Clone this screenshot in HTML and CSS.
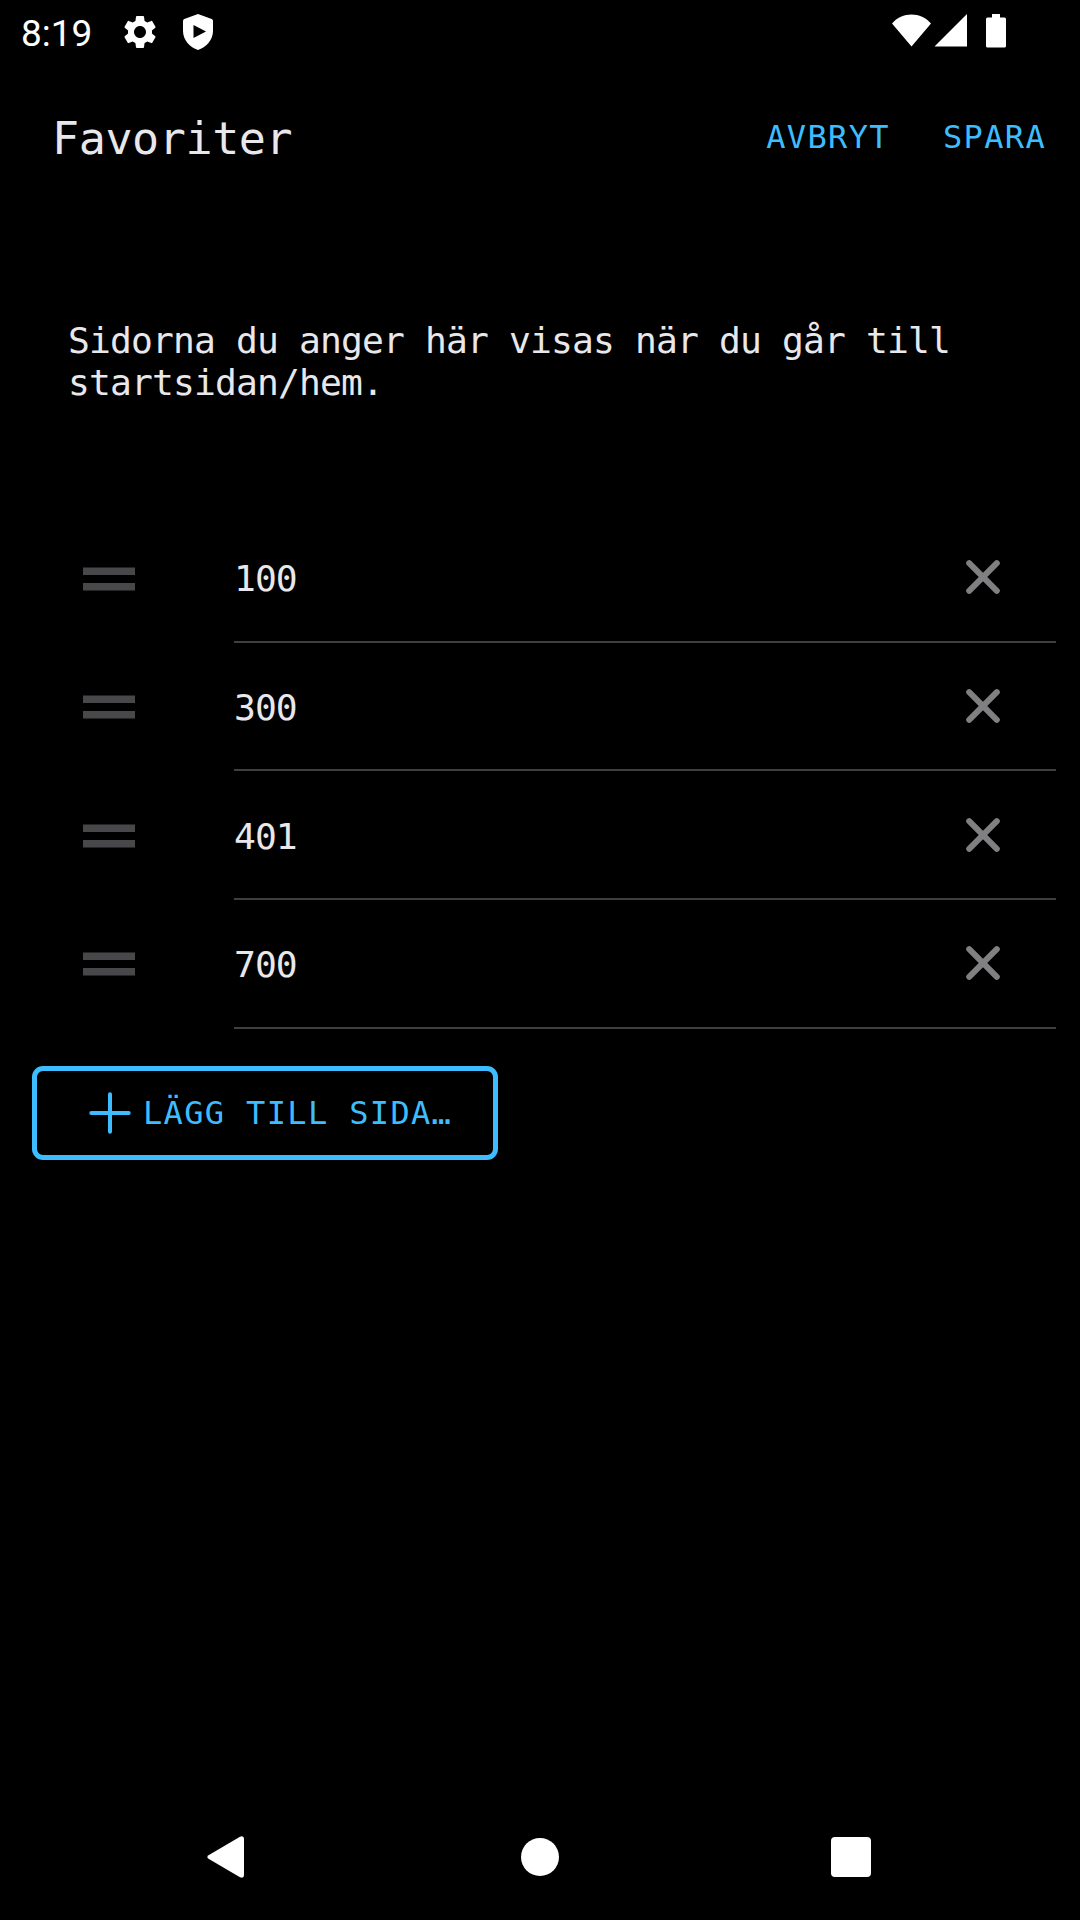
FILE: index.html
```html
<!DOCTYPE html>
<html lang="sv">
<head>
<meta charset="utf-8">
<title>Favoriter</title>
<link rel="stylesheet" href="styles.css">
</head>
<body>
<div class="screen">
  <div class="status">
    <span class="clock">8:19</span>
    <svg class="gear" viewBox="0 0 24 24"><path d="M19.14 12.94c.04-.3.06-.61.06-.94 0-.32-.02-.64-.07-.94l2.03-1.58c.18-.14.23-.41.12-.61l-1.92-3.32c-.12-.22-.37-.29-.59-.22l-2.39.96c-.5-.38-1.03-.7-1.62-.94L14.4 2.81c-.04-.24-.24-.41-.48-.41h-3.84c-.24 0-.43.17-.47.41l-.36 2.54c-.59.24-1.13.57-1.62.94l-2.39-.96c-.22-.08-.47 0-.59.22L2.74 8.87c-.12.21-.08.47.12.61l2.03 1.58c-.05.3-.09.63-.09.94s.02.64.07.94l-2.03 1.58c-.18.14-.23.41-.12.61l1.92 3.32c.12.22.37.29.59.22l2.39-.96c.5.38 1.03.7 1.62.94l.36 2.54c.05.24.24.41.48.41h3.84c.24 0 .44-.17.47-.41l.36-2.54c.59-.24 1.13-.56 1.62-.94l2.39.96c.22.08.47 0 .59-.22l1.92-3.32c.12-.22.07-.47-.12-.61l-2.01-1.58zM12 15.6c-1.98 0-3.6-1.62-3.6-3.6s1.62-3.6 3.6-3.6 3.6 1.62 3.6 3.6-1.62 3.6-3.6 3.6z"/></svg>
    <svg class="shield" viewBox="0 0 30 36"><path fill-rule="evenodd" d="M15 0 28.7 5Q30 5.600 30 7V17C30 26 23 33.500 15 36 7 33.500 0 26 0 17V7Q0 5.600 1.300 5ZM10.500 11V24L23 17.500Z"/></svg>
    <svg class="signals" viewBox="0 0 115 34"><path d="M0 9.500C10-2.500 29-2.500 39 9.500L19.500 32.500ZM42.500 32.500 75 0V32.500ZM100 0h8v3.500h4.500q1.500 0 1.500 1.500v27q0 1.500-1.500 1.500h-17q-1.500 0-1.500-1.500v-27q0-1.500 1.500-1.500h4.500Z"/></svg>
  </div>
  <header class="appbar">
    <h1 class="title">Favoriter</h1>
    <button class="action">AVBRYT</button>
    <button class="action">SPARA</button>
  </header>
  <p class="intro">Sidorna du anger här visas när du går till startsidan/hem.</p>
  <ul class="list">
    <li class="row">
      <svg class="handle" viewBox="0 0 52 24"><path d="M0 .5h52V8H0ZM0 16h52v7.500H0Z"/></svg>
      <div class="field"><span class="page">100</span><svg class="remove" viewBox="0 0 34 34"><path d="M3.200 3.200 30.800 30.800M30.800 3.200 3.200 30.800"/></svg></div>
    </li>
    <li class="row">
      <svg class="handle" viewBox="0 0 52 24"><path d="M0 .5h52V8H0ZM0 16h52v7.500H0Z"/></svg>
      <div class="field"><span class="page">300</span><svg class="remove" viewBox="0 0 34 34"><path d="M3.200 3.200 30.800 30.800M30.800 3.200 3.200 30.800"/></svg></div>
    </li>
    <li class="row">
      <svg class="handle" viewBox="0 0 52 24"><path d="M0 .5h52V8H0ZM0 16h52v7.500H0Z"/></svg>
      <div class="field"><span class="page">401</span><svg class="remove" viewBox="0 0 34 34"><path d="M3.200 3.200 30.800 30.800M30.800 3.200 3.200 30.800"/></svg></div>
    </li>
    <li class="row">
      <svg class="handle" viewBox="0 0 52 24"><path d="M0 .5h52V8H0ZM0 16h52v7.500H0Z"/></svg>
      <div class="field"><span class="page">700</span><svg class="remove" viewBox="0 0 34 34"><path d="M3.200 3.200 30.800 30.800M30.800 3.200 3.200 30.800"/></svg></div>
    </li>
  </ul>
  <button class="add">
    <svg class="plus" viewBox="0 0 42 42"><path d="M21 2.300V39.700M2.300 21H39.700"/></svg>
    <span>LÄGG TILL SIDA…</span>
  </button>
  <nav class="navbar">
    <svg class="back" viewBox="0 0 38 42"><path d="M1.500 19.200 33 .8Q37 -.8 37 3V39Q37 42.800 33 41.200L1.500 22.800Q-.8 21 1.500 19.200Z"/></svg>
    <span class="home"></span>
    <span class="recent"></span>
  </nav>
</div>
</body>
</html>
```
FILE: styles.css
```css
* { box-sizing: border-box; }

body {
  margin: 0;
  background: #000;
  color: #e8e8ec;
  font-family: "DejaVu Sans Mono", monospace;
}

.screen {
  width: 1080px;
  height: 1920px;
  display: flex;
  flex-direction: column;
}

svg { display: block; flex: none; fill: #fff; }

.status {
  height: 65px;
  padding: 14px 73px 0 21px;
  display: flex;
  align-items: flex-start;
}
.clock {
  width: 99px;
  font: 37px/40px Roboto, sans-serif;
  color: #fff;
}
.gear { width: 40px; height: 40px; margin-top: -2px; }
.shield { width: 30px; height: 36px; margin-left: 23px; }
.signals { width: 115px; height: 34px; margin-left: auto; }

.appbar {
  height: 147px;
  padding: 0 34px 0 52px;
  display: flex;
  align-items: center;
}
.title {
  margin: 0 auto 0 0;
  font-size: 45px;
  font-weight: 400;
  letter-spacing: -0.4px;
}

.action, .add {
  border: 0;
  padding: 0;
  background: none;
  color: #3dbdff;
  font: 32px/40px "DejaVu Sans Mono", monospace;
  letter-spacing: 1.35px;
}
.action { padding-bottom: 4px; }
.action + .action { margin-left: 53px; }

.intro {
  width: 960px;
  height: 194px;
  margin: 108px 0 0;
  padding-left: 68px;
  font-size: 36.300px;
  line-height: 42px;
  letter-spacing: -0.85px;
}

.list {
  margin: 0;
  padding: 0 24px 0 83px;
  list-style: none;
}
.row { height: 128.670px; display: flex; }
.handle { width: 52px; height: 24px; margin-top: 52.500px; fill: #48484a; }
.field {
  flex: 1;
  margin-left: 99px;
  padding-right: 56.500px;
  border-bottom: 2px solid #3f3f43;
  display: flex;
  align-items: center;
  justify-content: space-between;
}
.page {
  font-size: 36.300px;
  line-height: 42px;
  letter-spacing: -0.95px;
  padding-top: 4px;
}
.remove {
  width: 34px;
  height: 34px;
  fill: none;
  stroke: #808082;
  stroke-width: 6;
  stroke-linecap: round;
}

.add {
  width: 466px;
  height: 94px;
  margin: 37px 0 0 32px;
  padding-left: 52px;
  border: 5px solid #3dbdff;
  border-radius: 11px;
  display: flex;
  align-items: center;
  gap: 12px;
  white-space: nowrap;
}
.plus {
  width: 42px;
  height: 42px;
  fill: none;
  stroke: #3dbdff;
  stroke-width: 4;
  stroke-linecap: round;
}

.navbar {
  height: 126px;
  margin-top: auto;
  padding: 0 209px 0 207px;
  display: grid;
  grid-template-columns: 314px 310px 40px;
  align-items: center;
}
.back { width: 38px; height: 42px; }
.home { width: 38px; height: 38px; border-radius: 50%; background: #fff; }
.recent { width: 40px; height: 40px; border-radius: 4px; background: #fff; }
```
